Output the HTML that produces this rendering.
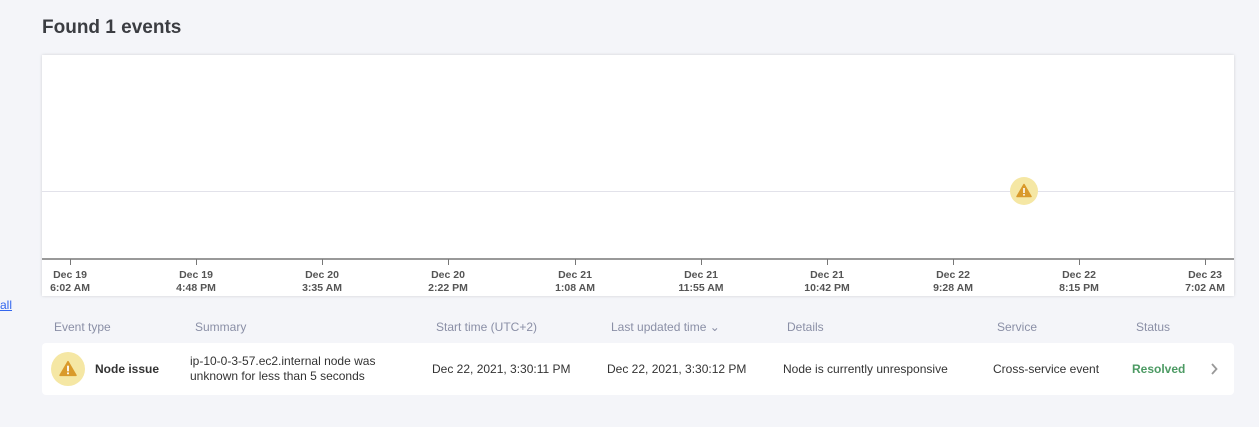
<!DOCTYPE html>
<html><head><style>
body{margin:0;width:1259px;height:427px;background:#f4f5f9;font-family:"Liberation Sans",Arial,sans-serif;position:relative;overflow:hidden;color:#333}
.a{position:absolute}
h1{position:absolute;left:42px;top:17px;margin:0;font-size:19px;font-weight:bold;color:#3b3d42}
.card{left:42px;top:55px;width:1192px;height:241px;background:#fff;box-shadow:0 0 3px rgba(0,0,0,.15)}
.tick{position:absolute;top:204px;width:1px;height:6px;background:#777}
.lab{position:absolute;top:214px;width:80px;margin-left:-40px;text-align:center;font-size:10.5px;font-weight:bold;color:#555;line-height:13px}
.th{top:320px;font-size:12px;color:#8a8fa6}
.row{left:42px;top:343px;width:1192px;height:52px;background:#fff;border-radius:4px}
.td{top:362px;font-size:12px;color:#333}
</style></head><body>
<h1>Found 1 events</h1>
<div class="a card">
 <div class="a" style="left:0;top:136px;width:1192px;height:1px;background:#e2e2ea"></div>
 <div class="a" style="left:0;top:203px;width:1192px;height:2px;background:#999"></div>
 <div class="a" style="left:968px;top:122px;width:28px;height:28px;border-radius:50%;background:#f5e7a4"></div>
 <svg class="a" style="left:974px;top:128px" width="16" height="15" viewBox="0 0 16 15"><path d="M8 1.5 L15 13.5 H1 Z" fill="#d99a2b" stroke="#d99a2b" stroke-linejoin="round" stroke-width="1.5"/><rect x="7.2" y="5" width="1.6" height="5" fill="#fff"/><rect x="7.2" y="11" width="1.6" height="1.6" fill="#fff"/></svg>
 <div class="tick" style="left:28px"></div><div class="lab" style="left:28px">Dec 19<br>6:02 AM</div>
 <div class="tick" style="left:154px"></div><div class="lab" style="left:154px">Dec 19<br>4:48 PM</div>
 <div class="tick" style="left:280px"></div><div class="lab" style="left:280px">Dec 20<br>3:35 AM</div>
 <div class="tick" style="left:406px"></div><div class="lab" style="left:406px">Dec 20<br>2:22 PM</div>
 <div class="tick" style="left:533px"></div><div class="lab" style="left:533px">Dec 21<br>1:08 AM</div>
 <div class="tick" style="left:659px"></div><div class="lab" style="left:659px">Dec 21<br>11:55 AM</div>
 <div class="tick" style="left:785px"></div><div class="lab" style="left:785px">Dec 21<br>10:42 PM</div>
 <div class="tick" style="left:911px"></div><div class="lab" style="left:911px">Dec 22<br>9:28 AM</div>
 <div class="tick" style="left:1037px"></div><div class="lab" style="left:1037px">Dec 22<br>8:15 PM</div>
 <div class="tick" style="left:1163px"></div><div class="lab" style="left:1163px">Dec 23<br>7:02 AM</div>
</div>
<div class="a" style="left:0;top:298px;font-size:12px;color:#3366ee;text-decoration:underline">all</div>
<div class="a th" style="left:54px">Event type</div>
<div class="a th" style="left:195px">Summary</div>
<div class="a th" style="left:436px">Start time (UTC+2)</div>
<div class="a th" style="left:611px">Last updated time ⌄</div>
<div class="a th" style="left:787px">Details</div>
<div class="a th" style="left:997px">Service</div>
<div class="a th" style="left:1136px">Status</div>
<div class="a row"></div>
<div class="a" style="left:51px;top:352px;width:34px;height:34px;border-radius:50%;background:#f5e7a4"></div>
<svg class="a" style="left:59px;top:360px" width="18" height="17" viewBox="0 0 16 15"><path d="M8 1.5 L15 13.5 H1 Z" fill="#d99a2b" stroke="#d99a2b" stroke-linejoin="round" stroke-width="1.5"/><rect x="7.2" y="5" width="1.6" height="5" fill="#fff"/><rect x="7.2" y="11" width="1.6" height="1.6" fill="#fff"/></svg>
<div class="a td" style="left:95px;font-weight:bold">Node issue</div>
<div class="a" style="left:190px;top:354px;font-size:12px;line-height:15px;color:#333">ip-10-0-3-57.ec2.internal node was<br>unknown for less than 5 seconds</div>
<div class="a td" style="left:432px">Dec 22, 2021, 3:30:11 PM</div>
<div class="a td" style="left:607px">Dec 22, 2021, 3:30:12 PM</div>
<div class="a td" style="left:783px">Node is currently unresponsive</div>
<div class="a td" style="left:993px">Cross-service event</div>
<div class="a td" style="left:1132px;color:#4c9a63;font-weight:bold">Resolved</div>
<svg class="a" style="left:1210px;top:363px" width="8" height="12" viewBox="0 0 8 12"><path d="M2 1 L6.5 6 L2 11" fill="none" stroke="#999" stroke-width="1.8"/></svg>
</body></html>
